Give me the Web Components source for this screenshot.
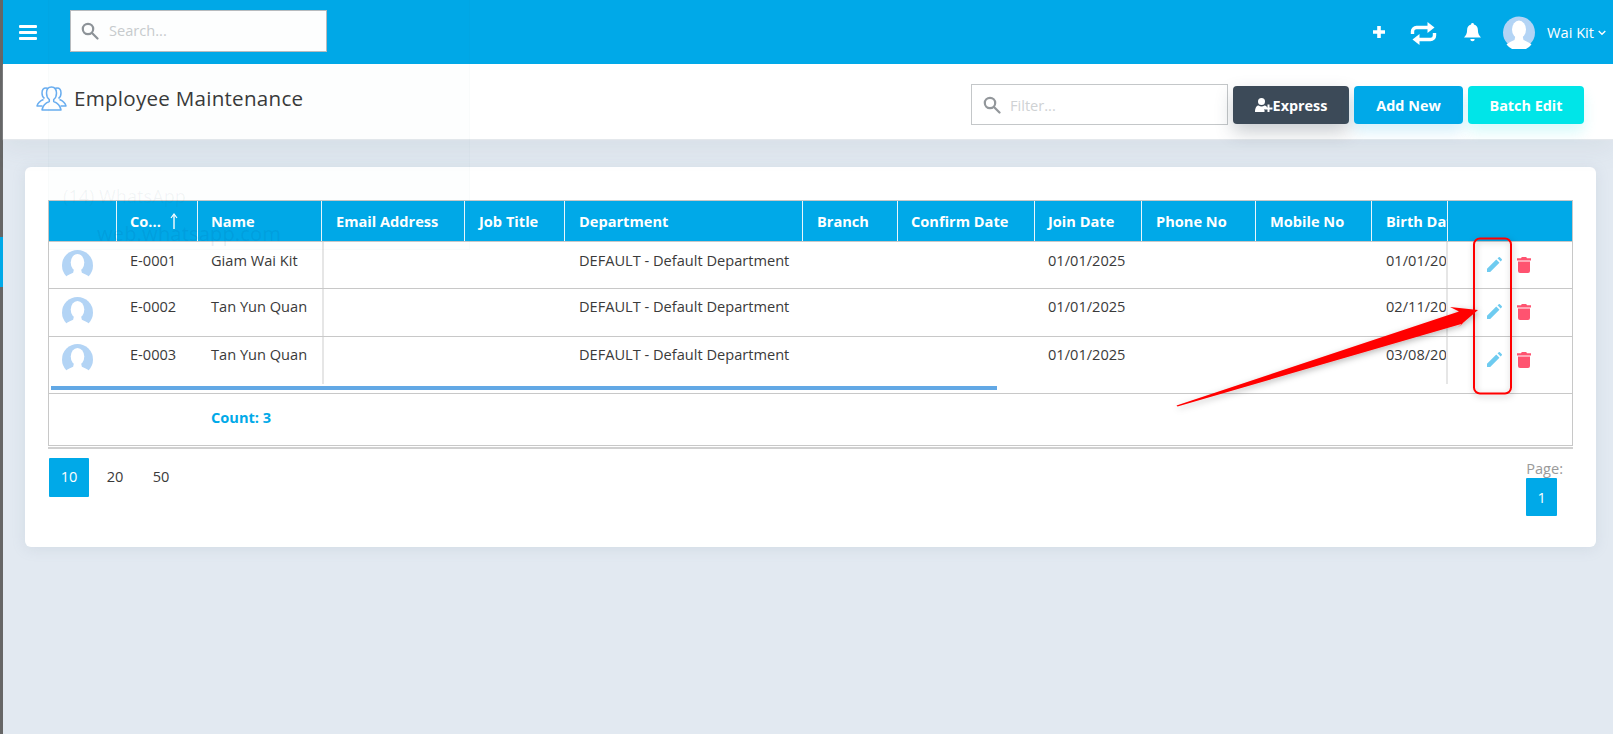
<!DOCTYPE html>
<html>
<head>
<meta charset="utf-8">
<title>Employee Maintenance</title>
<style>
  html, body { margin: 0; height: 100%; overflow: hidden; background: #e2e9f1; font-family: "Open Sans", "Noto Sans", sans-serif; }
</style>
</head>
<body>
<app-shell>
  <app-topbar></app-topbar>
  <page-header heading="Employee Maintenance"></page-header>
  <content-card>
    <employee-table></employee-table>
    <pager-bar></pager-bar>
  </content-card>
</app-shell>
<callout-overlay></callout-overlay>

<script>
const AVATAR = `
  <circle cx="16" cy="16" r="16" fill="#b3d4f5"/>
  <ellipse cx="16" cy="13" rx="7" ry="9" fill="#fff"/>
  <path d="M12.5 19h7l1 4.5c3 1.2 6 2.6 8 4.5A16 16 0 0 1 3.500 28c2-1.900 5-3.300 8-4.500z" fill="#fff"/>`;

class AppShell extends HTMLElement {
  constructor() {
    super();
    this._shadowRoot = this.attachShadow({ mode: "open" });
  }
  connectedCallback() {
    this._shadowRoot.innerHTML = `
      <style>
        :host { display: flex; height: 734px; }
        .strip { width: 3px; flex: none; display: flex; flex-direction: column; background: #666; }
        .strip i { display: block; height: 50px; margin-top: 237px; background: #00a9e8; }
        .main { flex: 1; min-width: 0; display: flex; flex-direction: column; }
      </style>
      <div class="strip"><i></i></div>
      <div class="main"><slot></slot></div>`;
  }
}

class AppTopbar extends HTMLElement {
  constructor() {
    super();
    this._shadowRoot = this.attachShadow({ mode: "open" });
  }
  connectedCallback() {
    this._shadowRoot.innerHTML = `
      <style>
        :host { display: flex; align-items: center; height: 64px; background: #00a9e8; color: #fff; position: relative; z-index: 2; }
        .burger { width: 18px; height: 15px; margin-left: 16px; display: flex; flex-direction: column; justify-content: space-between; }
        .burger i { display: block; height: 3px; background: #fff; border-radius: 1px; }
        .search { margin-left: 33px; margin-top: -3px; width: 257px; height: 42px; box-sizing: border-box; border: 1px solid #b9bcbf; background: #fff; display: flex; align-items: center; }
        .search svg { margin-left: 10px; }
        .search span { margin: -2px 0 0 10px; font-size: 14.6px; color: #c9ccce; }
        .right { margin-left: auto; display: flex; align-items: center; }
        .plus { margin-right: 24px; }
        .swap { margin-right: 27px; margin-top: 2px; }
        .bell { margin-right: 22px; }
        .name { margin-left: 12px; font-size: 14.6px; }
        .chev { margin: 1px 7px 0 4px; }
      </style>
      <div class="burger"><i></i><i></i><i></i></div>
      <div class="search">
        <svg width="18" height="18" viewBox="0 0 18 18" fill="none" stroke="#8f9499" stroke-width="2.200"><circle cx="7" cy="7" r="5.200"/><path d="M11 11l5.500 5.500" stroke-linecap="round"/></svg>
        <span>Search...</span>
      </div>
      <div class="right">
        <svg class="plus" width="14" height="14" viewBox="0 0 14 14"><path d="M5.200 1h3.600v4.200H13v3.600H8.800V13H5.200V8.800H1V5.200h4.200z" fill="#fff"/></svg>
        <svg class="swap" width="27" height="25" viewBox="0 0 27 25" fill="none" stroke="#fff" stroke-width="3.400" stroke-linejoin="round"><path d="M2.500 13V10.500a4 4 0 0 1 4-4H19"/><path d="M24.500 12v2.500a4 4 0 0 1-4 4H8"/><path d="M17.500 1l7 5.500-7 5.500z" fill="#fff" stroke="none"/><path d="M9.500 13l-7 5.500 7 5.500z" fill="#fff" stroke="none"/></svg>
        <svg class="bell" width="17" height="19" viewBox="0 0 17 19"><path d="M8.500 0a1.400 1.400 0 0 1 1.400 1.500c2.700.6 4 2.800 4 5.500 0 4 1.300 5.500 3.100 7.500H0C1.800 12.500 3.100 11 3.100 7c0-2.700 1.300-4.900 4-5.500A1.400 1.400 0 0 1 8.500 0zM6.300 16h4.400a2.200 2.200 0 0 1-4.400 0z" fill="#fff"/></svg>
        <svg width="32" height="33" viewBox="0 0 32 32">${AVATAR}</svg>
        <span class="name">Wai Kit</span>
        <svg class="chev" width="8" height="6" viewBox="0 0 8 6" fill="none" stroke="#fff" stroke-width="1.300"><path d="M.7 1l3.300 3.300L7.300 1"/></svg>
      </div>`;
  }
}

class PageHeader extends HTMLElement {
  constructor() {
    super();
    this._shadowRoot = this.attachShadow({ mode: "open" });
  }
  connectedCallback() {
    this._shadowRoot.innerHTML = `
      <style>
        :host { display: flex; align-items: flex-start; height: 75px; background: #fff; box-shadow: 0 1px 1px #e4e8ec, 0 10px 24px rgba(120,135,150,.1); position: relative; z-index: 1; }
        .title { display: flex; align-items: flex-start; margin: 20px 0 0 33px; }
        h1 { margin: 0 0 0 7px; font-size: 20.6px; font-weight: 500; color: #3a3a3a; letter-spacing: .25px; line-height: 28px; }
        .tools { margin-left: auto; margin-right: 29px; margin-top: 20px; display: flex; align-items: flex-start; }
        .filter { width: 257px; height: 41px; box-sizing: border-box; border: 1px solid #c4c7c9; display: flex; align-items: center; }
        .filter svg { margin-left: 11px; }
        .filter span { margin-left: 9px; font-size: 14.6px; color: #cfd2d4; }
        .btn { height: 38px; margin-top: 2px; margin-left: 5px; border-radius: 4px; color: #fff; font-size: 14.4px; font-weight: 700; display: flex; align-items: center; justify-content: center; }
        .express { width: 116px; background: #3c4a58; box-shadow: 0 8px 18px rgba(60,74,88,.28); }
        .add { width: 109px; background: #00a9e8; box-shadow: 0 8px 14px rgba(0,169,232,.16); }
        .batch { width: 116px; background: #00e5e8; box-shadow: 0 8px 14px rgba(0,229,232,.16); }
      </style>
      <div class="title">
        <svg width="31" height="27" viewBox="0 0 31 27" fill="none" stroke="#6aaef0" stroke-width="1.500" stroke-linejoin="round">
          <path d="M8.500 14.500c-1.600-1-2.500-3-2.500-5.500 0-3 1.600-5 4-5 .8 0 1.500.2 2 .6"/>
          <path d="M22.500 14.500c1.600-1 2.500-3 2.500-5.500 0-3-1.600-5-4-5-.8 0-1.500.2-2 .6"/>
          <path d="M7.500 15.500c-2.500 1-5.500 2.800-6.500 6.500h5.500"/>
          <path d="M23.500 15.500c2.500 1 5.500 2.800 6.500 6.500h-5.500"/>
          <path d="M15.500 3c-3 0-5 2.400-5 6 0 3.500 1.400 5.500 2.800 6.500v2c-2.900 1-6.300 3-7.300 8.500h19c-1-5.500-4.400-7.500-7.300-8.500v-2c1.400-1 2.800-3 2.800-6.500 0-3.600-2-6-5-6z" fill="#fff"/>
        </svg>
        <h1>${this.getAttribute("heading")}</h1>
      </div>
      <div class="tools">
        <div class="filter">
          <svg width="18" height="18" viewBox="0 0 18 18" fill="none" stroke="#93979b" stroke-width="2.200"><circle cx="7" cy="7" r="5.200"/><path d="M11 11l5.500 5.500" stroke-linecap="round"/></svg>
          <span>Filter...</span>
        </div>
        <div class="btn express">
          <svg width="18" height="14" viewBox="0 0 18 14" fill="#fff"><circle cx="6.500" cy="3.500" r="3.500"/><path d="M0 14c0-4 1.500-6.500 3.500-6.500 1 .7 2 1 3 1s2-.3 3-1c1 0 1.800.5 2.400 1.500V11H9.500v3z"/><path d="M12.500 6.500h2v3h3v2h-3v2.500h-2V11.500h-2.500v-2h2.500z"/></svg>Express
        </div>
        <div class="btn add">Add New</div>
        <div class="btn batch">Batch Edit</div>
      </div>`;
  }
}

class ContentCard extends HTMLElement {
  constructor() {
    super();
    this._shadowRoot = this.attachShadow({ mode: "open" });
  }
  connectedCallback() {
    this._shadowRoot.innerHTML = `
      <style>
        :host { display: block; width: 1571px; height: 380px; box-sizing: border-box; margin: 28px 0 0 22px; padding: 33px 0 0 23px; background: #fff; border-radius: 6px; box-shadow: 0 2px 14px rgba(130,150,170,.16); }
      </style>
      <slot></slot>`;
  }
}

class ActionIcons extends HTMLElement {
  constructor() {
    super();
    this._shadowRoot = this.attachShadow({ mode: "open" });
  }
  connectedCallback() {
    this._shadowRoot.innerHTML = `
      <style>
        :host { display: flex; gap: 15px; align-items: flex-start; }
      </style>
      <svg width="15" height="15" viewBox="0 0 16 16"><path d="M0 16v-3.400L9.900 2.700l3.400 3.400L3.400 16z" fill="#6ecbf0"/><path d="M11.200 1.400L12.300.4a1.200 1.200 0 0 1 1.700 0l1.600 1.600a1.200 1.200 0 0 1 0 1.700l-1.100 1.100z" fill="#6ecbf0"/></svg>
      <svg width="14" height="16" viewBox="0 0 14 16"><path d="M4.800 0h4.400l.8 1.200H14v2.200H0V1.200h4zM1 4.500h12V14a2 2 0 0 1-2 2H3a2 2 0 0 1-2-2z" fill="#ff5370"/></svg>`;
  }
}

class EmployeeTable extends HTMLElement {
  constructor() {
    super();
    this._shadowRoot = this.attachShadow({ mode: "open" });
    this.cols = "68px 81px 124px 143px 100px 238px 95px 137px 107px 114px 116px 76px 124px";
    this.styles = `
      :host { display: block; width: 1525px; box-sizing: border-box; border: 1px solid #c8c8c8; color: #3a3a3a; font-size: 14.6px; }
      .row { display: grid; grid-template-columns: ${this.cols}; }
      .head { height: 40px; background: #00a9e8; color: #fff; font-weight: 700; border-bottom: 1px solid #c8c8c8; box-sizing: content-box; }
      .head div { display: flex; align-items: center; padding-left: 14px; box-sizing: border-box; border-right: 1px solid #e8f6fc; white-space: nowrap; overflow: hidden; height: 40px; }
      .head div:last-child { border-right: 0; }
      .head div:nth-child(2), .head div:nth-child(3), .head div:nth-child(8), .head div:nth-child(9) { padding-left: 13px; }
      .head svg { margin-left: 9px; flex: none; }
      .body .row { height: 46px; border-bottom: 1px solid #c8c8c8; }
      .body .row:nth-child(2) { height: 47px; }
      .body .row:last-child { height: 49px; border-bottom: 0; }
      .body .row > * { padding: 8px 0 0 14px; box-sizing: border-box; white-space: nowrap; overflow: hidden; line-height: 20px; }
      .body .row:nth-child(2) > *, .body .row:last-child > * { padding-top: 7px; }
      .body .row > :nth-child(2), .body .row > :nth-child(3), .body .row > :nth-child(9) { padding-left: 13px; }
      .body .row > .avatar { padding: 8px 0 0 13px; }
      .body .row:last-child > .avatar { padding-top: 7px; }
      .body .row .sep { border-right: 2px solid #e6e6e6; }
      .body .row .sepl { border-left: 2px solid #e6e6e6; }
      .body .row:last-child .sep, .body .row:last-child .sepl { height: 47px; }
      .body .row > action-icons, .body .row:nth-child(2) > action-icons, .body .row:last-child > action-icons { padding: 15px 0 0 39px; overflow: visible; }
      .scroll { height: 7px; border-bottom: 1px solid #c8c8c8; }
      .scroll i { display: block; width: 946px; height: 4px; margin-left: 2px; background: #62a8e5; }
      .foot { height: 51px; display: grid; grid-template-columns: ${this.cols}; font-weight: 700; color: #00a9e8; }
      .foot span { grid-column: 3; padding: 13px 0 0 13px; line-height: 20px; }
    `;
    this.titles = ["", "Co...", "Name", "Email Address", "Job Title", "Department", "Branch", "Confirm Date", "Join Date", "Phone No", "Mobile No", "Birth Date", ""];
    this.rows = [
      ["E-0001", "Giam Wai Kit", "01/01/2025", "01/01/2025"],
      ["E-0002", "Tan Yun Quan", "01/01/2025", "02/11/2025"],
      ["E-0003", "Tan Yun Quan", "01/01/2025", "03/08/2025"],
    ];
  }

  connectedCallback() {
    this.render();
  }

  render() {
    const head = this.titles.map((t, i) => `<div>${t}${i === 1 ? '<svg width="8" height="16" viewBox="0 0 8 16" fill="none" stroke="#fff" stroke-width="1.400"><path d="M4 16V2"/><path d="M1 5l3-4 3 4" stroke-width="1.200"/></svg>' : ""}</div>`).join("");
    const body = this.rows.map((r) => `
      <div class="row">
        <div class="avatar"><svg width="31" height="31" viewBox="0 0 32 32">${AVATAR}</svg></div>
        <div>${r[0]}</div>
        <div>${r[1]}</div>
        <div class="sepl"></div><div></div>
        <div>DEFAULT - Default Department</div>
        <div></div><div></div>
        <div>${r[2]}</div>
        <div></div><div></div>
        <div class="sep">${r[3]}</div>
        <action-icons></action-icons>
      </div>`).join("");
    this._shadowRoot.innerHTML = `
      <style>${this.styles}</style>
      <div class="row head">${head}</div>
      <div class="body">${body}</div>
      <div class="scroll"><i></i></div>
      <div class="foot"><span>Count: 3</span></div>`;
  }
}

class PagerBar extends HTMLElement {
  constructor() {
    super();
    this._shadowRoot = this.attachShadow({ mode: "open" });
  }
  connectedCallback() {
    this._shadowRoot.innerHTML = `
      <style>
        :host { display: flex; justify-content: space-between; width: 1525px; margin-top: 1px; border-top: 2px solid #d0d0d0; padding-top: 9px; font-size: 14.6px; color: #3a3a3a; }
        .sizes { display: flex; margin-left: 1px; }
        .sizes span { width: 40px; height: 36px; padding-bottom: 3px; display: flex; align-items: center; justify-content: center; margin-right: 6px; }
        .on { background: #00a9e8; color: #fff; border-radius: 1px; }
        .pages { display: flex; flex-direction: column; margin-right: 13px; }
        .pages label { color: #9a9a9a; line-height: 20px; margin-right: -3px; }
        .pages span { width: 31px; height: 38px; display: flex; align-items: center; justify-content: center; }
      </style>
      <div class="sizes"><span class="on">10</span><span>20</span><span>50</span></div>
      <div class="pages"><label>Page:</label><span class="on">1</span></div>`;
  }
}

// red markup and the faint window ghost both sit on top of the page
class CalloutOverlay extends HTMLElement {
  constructor() {
    super();
    this._shadowRoot = this.attachShadow({ mode: "open" });
  }
  connectedCallback() {
    this._shadowRoot.innerHTML = `
      <style>
        :host { position: absolute; left: 0; top: 0; width: 1613px; height: 734px; pointer-events: none; z-index: 5; }
        svg { position: absolute; left: 0; top: 0; }
        .ghost { position: absolute; left: 48px; top: 0; width: 422px; height: 250px; background: rgba(40,70,90,.008); border: 1px solid rgba(60,80,100,.018); border-top: 0; box-sizing: border-box; }
        .ghost span { position: absolute; white-space: nowrap; font-family: "Noto Sans", sans-serif; }
        .t1 { left: 14px; top: 184px; font-size: 18px; color: rgba(60,80,100,.06); }
        .t2 { left: 48px; top: 220px; font-size: 20px; letter-spacing: .1px; color: rgba(0,70,130,.09); }
      </style>
      <div class="ghost"><span class="t1">(14) WhatsApp</span><span class="t2">web.whatsapp.com</span></div>
      <svg width="1613" height="734" viewBox="0 0 1613 734">
        <defs><filter id="s" x="-20%" y="-20%" width="140%" height="140%"><feDropShadow dx="1" dy="2" stdDeviation="3" flood-color="#000" flood-opacity=".28"/></filter></defs>
        <rect x="1474" y="238.500" width="37" height="155" rx="6" fill="none" stroke="#f00" stroke-width="2" filter="url(#s)"/>
        <path d="M1176.500 405.500L1459 311.500 1450 307 1478 310 1457 328 1463 323.500 1177.500 406.500z" fill="#f00" filter="url(#s)"/>
      </svg>`;
  }
}

customElements.define("app-shell", AppShell);
customElements.define("app-topbar", AppTopbar);
customElements.define("page-header", PageHeader);
customElements.define("content-card", ContentCard);
customElements.define("action-icons", ActionIcons);
customElements.define("employee-table", EmployeeTable);
customElements.define("pager-bar", PagerBar);
customElements.define("callout-overlay", CalloutOverlay);
</script>
</body>
</html>
